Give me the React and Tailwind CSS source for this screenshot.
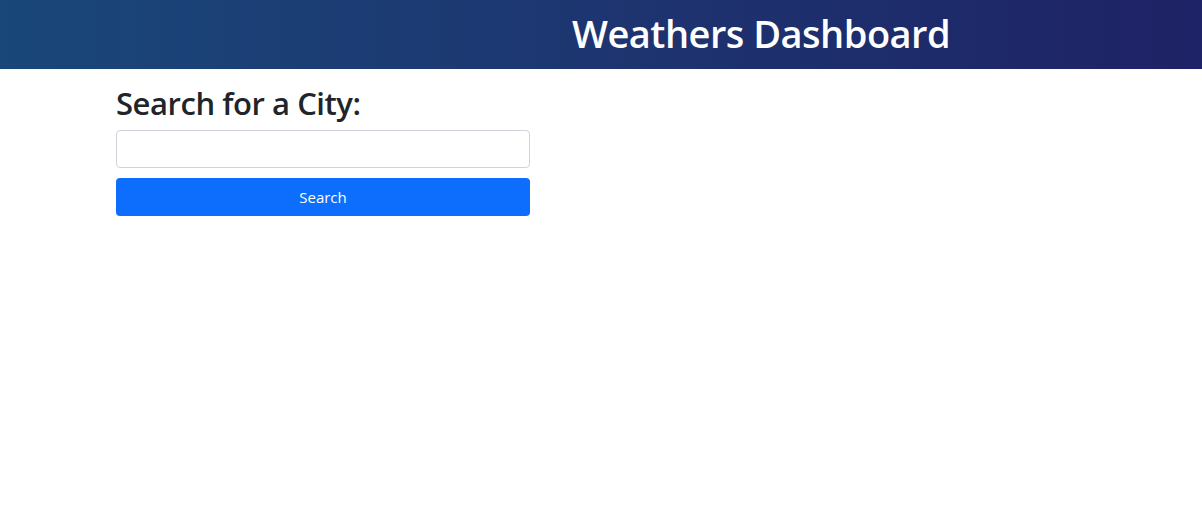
export default function App() {
  return (
    <div className="min-h-screen bg-white font-['Open_Sans',sans-serif] text-[#212529]">
      <header className="h-[69px] bg-gradient-to-r from-[#19477a] to-[#1e2266] flex items-center">
        <h1 className="ml-[572px] -mt-[3px] text-[38px] font-semibold text-white leading-none tracking-[-0.5px]">
          Weathers Dashboard
        </h1>
      </header>

      <main className="pl-[116px] pt-[16px]">
        <div className="w-[414px] flex flex-col">
          <h2 className="text-[31px] font-semibold leading-[1.2] tracking-[-0.45px] mb-[8px]">
            Search for a City:
          </h2>
          <input
            type="text"
            className="h-[38px] w-full rounded-[4px] border border-[#ced4da] px-3 outline-none"
          />
          <button className="mt-[10px] h-[38px] w-full rounded-[4px] bg-[#0d6efd] text-white text-[15px]">
            Search
          </button>
        </div>
      </main>
    </div>
  );
}
